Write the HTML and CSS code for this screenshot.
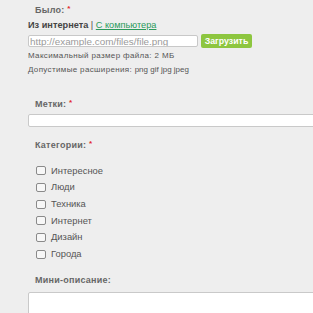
FILE: index.html
```html
<!doctype html><html lang="ru"><head>
<meta charset="UTF-8" />
<title>Загрузка</title>
<link rel="stylesheet" href="styles.css"></head><body>
<div class="form">
	<div class="row">
		<div class="lbl">Было: <i>*</i></div>
		<div class="src"><b>Из интернета</b> | <a href="#">С компьютера</a></div>
		<div class="flex ac upload">
			<input class="url" placeholder="http://example.com/files/file.png" />
			<button class="btn">Загрузить</button>
		</div>
		<div class="hint">Максимальный размер файла: 2 МБ</div>
		<div class="hint">Допустимые расширения: <span class="ext">png gif jpg jpeg</span></div>
	</div>
	<div class="row tags">
		<div class="lbl">Метки: <i>*</i></div>
		<input class="wide" />
	</div>
	<div class="row cat">
		<div class="lbl">Категории: <i>*</i></div>
		<ul class="cats">
			<li><label><input type="checkbox" /> Интересное</label></li>
			<li><label><input type="checkbox" /> Люди</label></li>
			<li><label><input type="checkbox" /> Техника</label></li>
			<li><label><input type="checkbox" /> Интернет</label></li>
			<li><label><input type="checkbox" /> Дизайн</label></li>
			<li><label><input type="checkbox" /> Города</label></li>
		</ul>
	</div>
	<div class="row desc">
		<div class="lbl">Мини-описание:</div>
		<textarea class="wide area"></textarea>
	</div>
</div>
</body></html>
```
FILE: styles.css
```css
html, body{ margin: 0; background: #eeeeee; overflow: hidden }
body{ font: 9px/12px "Liberation Sans", Arial, sans-serif; color: #555 }
.flex{ display: flex }
.ac{ align-items: center }
a{ color: #2b9a5b; text-decoration: underline }
.form{ padding: 4px 0 0 28px }
.lbl{ height: 12px; line-height: 12px; margin-left: 7px; font-size: 9px; font-weight: bold; letter-spacing: 0.25px; color: #666; white-space: nowrap }
.lbl i{ position: relative; top: -2px; color: #e3272d; font-style: normal; font-size: 8px }
.src{ height: 13px; line-height: 13px; margin-top: 3px; font-size: 9.2px; color: #444 }
.upload{ margin-top: 2px; gap: 3px; height: 14px }
.url{ width: 170px; height: 12px; box-sizing: border-box; border: 1px solid #c8c8c8; border-radius: 2px; background: #fff; padding: 0 1px; font: 9.9px "Liberation Sans", Arial, sans-serif; outline: none }
.url::placeholder{ color: #9a9a9a }
.btn{ width: 51px; height: 14px; padding: 0; border: none; border-radius: 2px; background: #8dc63f; color: #fff; font: bold 8.8px "Liberation Sans", Arial, sans-serif }
.hint{ height: 14px; line-height: 14px; font-size: 8px; letter-spacing: 0.35px; color: #555 }
.hint .ext{ letter-spacing: 0 }
.upload + .hint{ margin-top: 1px }
.tags{ margin-top: 21px }
.wide{ display: block; width: 300px; box-sizing: border-box; margin: 4px 0 0; height: 13px; border: 1px solid #c9c9c9; border-radius: 2px; background: #fff; outline: none }
.cat{ margin-top: 12px }
.cats{ list-style: none; margin: 11.67px 0 0 8px; padding: 0 }
.cats li{ height: 16.67px; line-height: 16.67px; font-size: 9.4px; color: #555 }
.cats label{ display: flex; align-items: center; gap: 5px; height: 16.67px }
.cats input{ appearance: none; margin: 0; width: 10px; height: 9px; border: 1px solid #8a8a8a; border-radius: 2px; background: #f7f7f7; box-sizing: border-box }
.desc{ margin-top: 11.33px }
.area{ height: 40px; margin-top: 6px; resize: none }
```
